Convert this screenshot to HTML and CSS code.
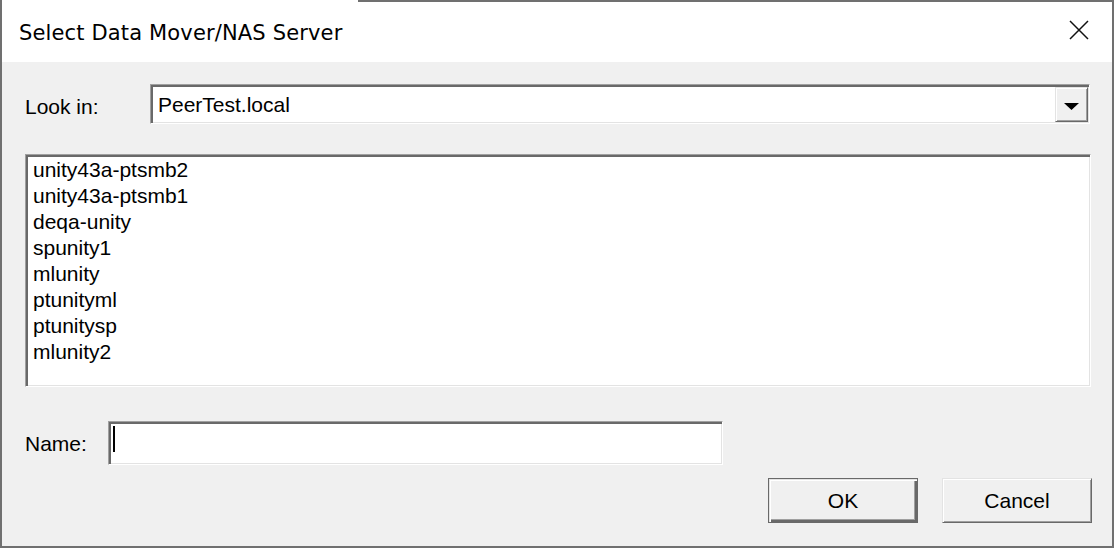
FILE: index.html
```html
<!DOCTYPE html>
<html>
<head>
<meta charset="utf-8">
<link rel="stylesheet" href="styles.css">
</head>
<body>
<div class="window">
  <div class="titlebar">
    <span class="title">Select Data Mover/NAS Server</span>
    <svg class="close" width="20" height="20" viewBox="0 0 20 20"><path d="M1 1 L19 19 M19 1 L1 19" stroke="#111" stroke-width="1.5" fill="none"/></svg>
  </div>
  <div class="content">
    <div class="row look-row">
      <span class="label look-label">Look in:</span>
      <div class="combo sunken">
        <span class="combo-text">PeerTest.local</span>
        <div class="dropbtn raised">
          <svg width="15" height="7" viewBox="0 0 15 7"><polygon points="0,0 15,0 7.5,7" fill="#000"/></svg>
        </div>
      </div>
    </div>
    <div class="listbox sunken">
      <div class="item">unity43a-ptsmb2</div>
      <div class="item">unity43a-ptsmb1</div>
      <div class="item">deqa-unity</div>
      <div class="item">spunity1</div>
      <div class="item">mlunity</div>
      <div class="item">ptunityml</div>
      <div class="item">ptunitysp</div>
      <div class="item">mlunity2</div>
    </div>
    <div class="row name-row">
      <span class="label name-label">Name:</span>
      <div class="textinput sunken"><span class="caret"></span></div>
    </div>
    <div class="buttons">
      <div class="btn btn-default">OK</div>
      <div class="btn raised">Cancel</div>
    </div>
  </div>
</div>
</body>
</html>
```

FILE: styles.css
```css
html, body {
  margin: 0;
  padding: 0;
  background: #f0f0f0;
}
body {
  font-family: "Liberation Sans", Arial, sans-serif;
  font-size: 21px;
  color: #000;
}
.window {
  position: relative;
  width: 1114px;
  height: 548px;
  box-sizing: border-box;
  border: 2px solid #707070;
  border-top: none;
  background: #f0f0f0;
  display: flex;
  flex-direction: column;
}
.window::before {
  content: "";
  position: absolute;
  top: 0;
  left: 356px;
  right: -2px;
  height: 2px;
  background: #707070;
}
.titlebar {
  height: 62px;
  background: #fff;
  display: flex;
  align-items: center;
  padding-left: 17px;
  padding-right: 23px;
}
.title {
  font-family: "DejaVu Sans", "Open Sans", sans-serif;
  font-size: 21px;
  letter-spacing: 0.15px;
  color: #000;
  flex: 1;
  padding-top: 3px;
}
.close {
  display: block;
  margin-bottom: 2px;
}
.content {
  display: flex;
  flex-direction: column;
  padding: 22px 0 0 23px;
}
.row {
  display: flex;
  align-items: center;
}
.label {
  line-height: 24px;
}
.look-label {
  width: 125px;
  padding-top: 5px;
}
.name-label {
  width: 83px;
  padding-top: 1px;
}
.sunken {
  box-sizing: border-box;
  background: #fff;
  border: 1px solid;
  border-color: #a0a0a0 #fff #fff #a0a0a0;
  box-shadow: inset 2px 2px 0 #696969, inset -1px -1px 0 #e3e3e3;
}
.raised {
  box-sizing: border-box;
  background: #f0f0f0;
  border: 1px solid;
  border-color: #e3e3e3 #696969 #696969 #e3e3e3;
  box-shadow: inset 1px 1px 0 #fff, inset -1px -1px 0 #a0a0a0;
}
.combo {
  width: 940px;
  height: 40px;
  display: flex;
  align-items: flex-start;
}
.combo-text {
  padding-left: 7px;
  padding-top: 8px;
  line-height: 24px;
  flex: 1;
}
.dropbtn {
  width: 33px;
  height: 35px;
  margin-top: 2px;
  margin-right: 1px;
  display: flex;
  align-items: center;
  justify-content: center;
  padding-top: 4px;
}
.dropbtn svg {
  display: block;
}
.listbox {
  margin-top: 30px;
  width: 1066px;
  height: 233px;
  padding: 2px 0 0 7px;
}
.item {
  line-height: 26px;
  height: 26px;
  white-space: nowrap;
}
.name-row {
  margin-top: 34px;
}
.textinput {
  width: 615px;
  height: 44px;
  padding: 4px 0 0 4px;
}
.caret {
  display: block;
  width: 2px;
  height: 26px;
  background: #000;
}
.buttons {
  display: flex;
  justify-content: flex-end;
  gap: 24px;
  margin-top: 13px;
  padding-right: 20px;
}
.btn {
  box-sizing: border-box;
  width: 150px;
  height: 45px;
  display: flex;
  align-items: center;
  justify-content: center;
  line-height: 24px;
  padding-top: 1px;
}
.btn-default {
  background: #f0f0f0;
  border: 1px solid #696969;
  box-shadow: inset 1px 1px 0 #e3e3e3, inset 2px 2px 0 #fff, inset -2px -2px 0 #696969, inset -3px -3px 0 #a0a0a0;
}
```
